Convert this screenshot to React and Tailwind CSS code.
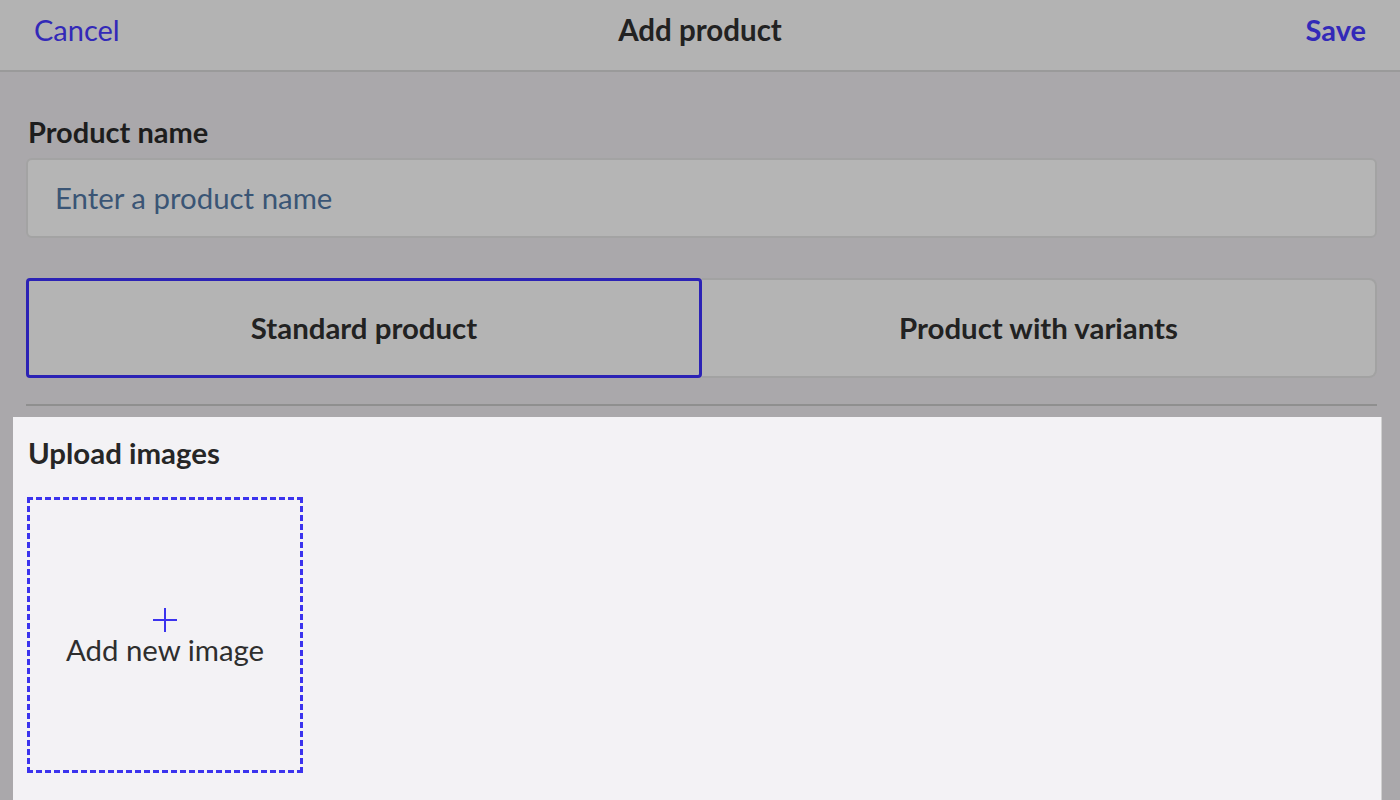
export default function App() {
  return (
    <div className="w-[1400px] h-[800px] overflow-hidden bg-[#aaa8ab] flex flex-col" style={{ fontFamily: 'Lato, "Noto Sans", sans-serif' }}>
      <div className="h-[72px] shrink-0 bg-[#b3b3b3] border-b-2 border-[#9a9a9a] flex items-center justify-between px-[34px] pb-[12px] relative">
        <span className="text-[29px] text-[#3229b8] leading-none">Cancel</span>
        <span className="absolute left-0 right-0 top-[15px] text-center text-[29.5px] font-bold text-[#222] leading-none pointer-events-none">Add product</span>
        <span className="text-[29px] font-bold text-[#3229b8] leading-none">Save</span>
      </div>
      <div className="pl-[26px] pr-[23px] pt-[45px]">
        <div className="pl-[2px] text-[29px] font-bold text-[#1d1d1d] leading-none">Product name</div>
        <div className="mt-[12px] h-[80px] rounded-[6px] border-2 border-[#a3a3a3] bg-[#b5b5b5] flex items-center px-[27px]">
          <span className="text-[29.4px] text-[#3a5575]">Enter a product name</span>
        </div>
        <div className="mt-[40px] flex h-[100px]">
          <div className="w-[676px] rounded-[4px] border-[3px] border-[#2b22b5] bg-[#b4b4b4] flex items-center justify-center">
            <span className="text-[29.4px] font-bold text-[#222]">Standard product</span>
          </div>
          <div className="flex-1 rounded-r-[8px] border-2 border-l-0 border-[#a2a2a2] bg-[#b4b4b4] flex items-center justify-center">
            <span className="text-[29.4px] font-bold text-[#222]">Product with variants</span>
          </div>
        </div>
        <div className="mt-[26px] h-[2px] bg-[#8f8f8f]" />
      </div>
      <div className="ml-[13px] w-[1369px] mt-[11px] flex-1 bg-[#f3f2f5] border-r border-[#d0d0d0] px-[14px] pt-[21px]">
        <div className="pl-[1px] text-[29.4px] font-bold text-[#262626] leading-none">Upload images</div>
        <div className="mt-[30px] w-[276px] h-[276px] border-[3px] border-dashed border-[#3b33ee] flex flex-col items-center justify-center">
          <svg width="26" height="26" viewBox="0 0 26 26" className="mb-[2px]">
            <path d="M13 1 V25 M1 13 H25" stroke="#3b33ee" strokeWidth="2" fill="none" />
          </svg>
          <span className="text-[29.4px] text-[#2e2e2e] leading-none">Add new image</span>
        </div>
      </div>
    </div>
  );
}
